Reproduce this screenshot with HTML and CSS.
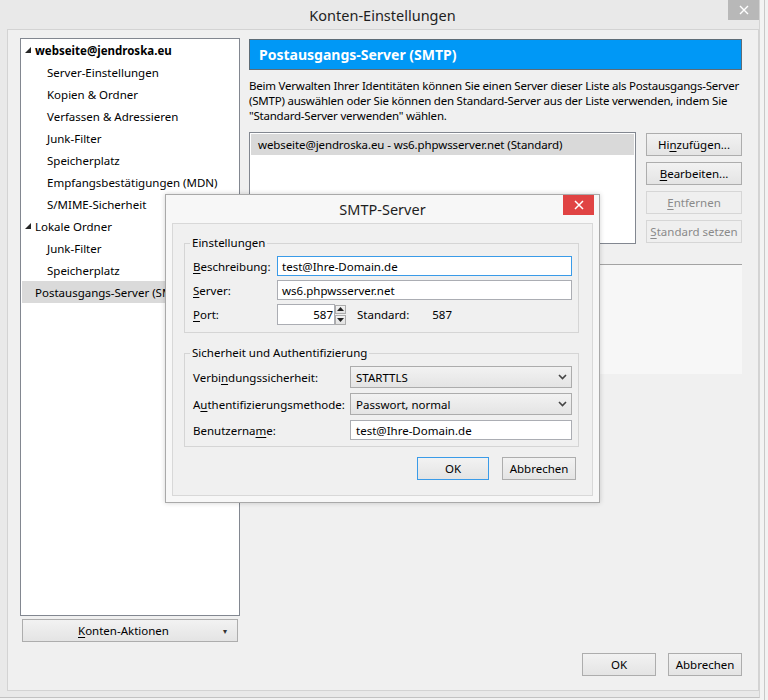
FILE: index.html
```html
<!DOCTYPE html>
<html lang="de">
<head>
<meta charset="utf-8">
<title>Konten-Einstellungen</title>
<link rel="stylesheet" href="styles.css">
</head>
<body>
<div class="screen">
  <div class="win">
    <div class="titlebar">
      <span class="title">Konten-Einstellungen</span>
      <div class="wclose"><svg width="10" height="10" viewBox="0 0 10 10"><path d="M1 1L9 9M9 1L1 9" stroke="#fff" stroke-width="1.4" fill="none"/></svg></div>
    </div>
    <div class="client">
      <div class="main">
        <div class="leftcol">
          <div class="tree">
            <div class="row lvl0 bold"><svg class="tri" width="7" height="7" viewBox="0 0 7 7"><polygon points="6,0 6,6 0,6" fill="#262626"/></svg>webseite@jendroska.eu</div>
            <div class="row lvl1">Server-Einstellungen</div>
            <div class="row lvl1">Kopien &amp; Ordner</div>
            <div class="row lvl1">Verfassen &amp; Adressieren</div>
            <div class="row lvl1">Junk-Filter</div>
            <div class="row lvl1">Speicherplatz</div>
            <div class="row lvl1">Empfangsbestätigungen (MDN)</div>
            <div class="row lvl1">S/MIME-Sicherheit</div>
            <div class="row lvl0"><svg class="tri" width="7" height="7" viewBox="0 0 7 7"><polygon points="6,0 6,6 0,6" fill="#262626"/></svg>Lokale Ordner</div>
            <div class="row lvl1">Junk-Filter</div>
            <div class="row lvl1">Speicherplatz</div>
            <div class="row lvl0 plain sel">Postausgangs-Server (SMTP)</div>
          </div>
          <button class="btn actions"><span><u>K</u>onten-Aktionen</span><span class="caret">▾</span></button>
        </div>
        <div class="rightcol">
          <div class="header">Postausgangs-Server (SMTP)</div>
          <div class="desc">Beim Verwalten Ihrer Identitäten können Sie einen Server dieser Liste als Postausgangs-Server<br>(SMTP) auswählen oder Sie können den Standard-Server aus der Liste verwenden, indem Sie<br>"Standard-Server verwenden" wählen.</div>
          <div class="listarea">
            <div class="list">
              <div class="listrow">webseite@jendroska.eu - ws6.phpwsserver.net (Standard)</div>
            </div>
            <div class="btncol">
              <button class="btn">Hi<u>n</u>zufügen...</button>
              <button class="btn"><u>B</u>earbeiten...</button>
              <button class="btn dis"><u>E</u>ntfernen</button>
              <button class="btn dis"><u>S</u>tandard setzen</button>
            </div>
          </div>
          <div class="details"></div>
        </div>
      </div>
      <div class="footer">
        <button class="btn fbtn">OK</button>
        <button class="btn fbtn">Abbrechen</button>
      </div>
    </div>
  </div>
  <div class="edge"></div>

  <div class="dialog">
    <div class="dtitle">SMTP-Server</div>
    <div class="dclose"><svg width="10" height="10" viewBox="0 0 10 10"><path d="M1 1L9 9M9 1L1 9" stroke="#fff" stroke-width="1.5" fill="none"/></svg></div>
    <div class="panel">
      <fieldset class="group g1">
        <legend>Einstellungen</legend>
        <div class="frow r1"><span><u>B</u>eschreibung:</span><div class="input focus">test@Ihre-Domain.de</div></div>
        <div class="frow r2"><span><u>S</u>erver:</span><div class="input">ws6.phpwsserver.net</div></div>
        <div class="frow r3"><span><u>P</u>ort:</span>
          <div class="portline">
            <div class="input port">587</div>
            <div class="spin">
              <div class="sp"><svg width="7" height="4" viewBox="0 0 7 4"><polygon points="3.5,0 7,4 0,4" fill="#222"/></svg></div>
              <div class="sp"><svg width="7" height="4" viewBox="0 0 7 4"><polygon points="0,0 7,0 3.5,4" fill="#222"/></svg></div>
            </div>
            <span class="stdlbl">Standard:</span><span>587</span>
          </div>
        </div>
      </fieldset>
      <fieldset class="group g2">
        <legend>Sicherheit und Authentifizierung</legend>
        <div class="frow s1"><span>Verbi<u>n</u>dungssicherheit:</span><div class="select"><span>STARTTLS</span><svg width="9" height="6" viewBox="0 0 9 6"><path d="M1 1L4.5 4.5L8 1" stroke="#444" stroke-width="1.6" fill="none"/></svg></div></div>
        <div class="frow s1"><span>A<u>u</u>thentifizierungsmethode:</span><div class="select"><span>Passwort, normal</span><svg width="9" height="6" viewBox="0 0 9 6"><path d="M1 1L4.5 4.5L8 1" stroke="#444" stroke-width="1.6" fill="none"/></svg></div></div>
        <div class="frow s2"><span>Benutzerna<u>m</u>e:</span><div class="input">test@Ihre-Domain.de</div></div>
      </fieldset>
      <div class="dbtns">
        <button class="btn dok">OK</button>
        <button class="btn dcancel">Abbrechen</button>
      </div>
    </div>
  </div>
</div>
</body>
</html>
```
FILE: styles.css
```css
* { box-sizing: border-box; }
body {
  margin: 0;
  background: #f2f2f2;
  font-family: "Segoe UI", "Noto Sans", sans-serif;
  font-size: 11.5px;
  color: #000;
}
u { text-decoration: underline; text-underline-offset: 2px; }
.screen {
  position: relative;
  width: 768px;
  height: 700px;
  overflow: hidden;
  background: #f2f2f2;
  display: flex;
}
.win {
  width: 760px;
  height: 698px;
  flex: none;
  background: #e9e9e9;
  border-right: 1px solid #d4d4d4;
  border-bottom: 1px solid #c2c2c2;
  display: flex;
  flex-direction: column;
}
.titlebar {
  height: 29px;
  flex: none;
  position: relative;
  display: flex;
  align-items: center;
  justify-content: center;
}
.title { font-size: 14.5px; color: #1e1e1e; padding-left: 6px; }
.wclose {
  position: absolute;
  top: 0;
  right: 0;
  width: 31px;
  height: 20px;
  background: #b8b8b8;
  display: flex;
  align-items: center;
  justify-content: center;
}
.client {
  flex: 1;
  margin: 0 0 6px 7px;
  border: 1px solid #d3d3d3;
  background: #f0f0f0;
  padding: 8px 16px 0 12px;
  display: flex;
  flex-direction: column;
}
.main { display: flex; gap: 9px; }
.leftcol { width: 220px; flex: none; display: flex; flex-direction: column; }
.tree {
  height: 578px;
  border: 1px solid #828790;
  background: #fff;
  padding: 0 1px;
}
.row {
  height: 22px;
  display: flex;
  align-items: center;
  white-space: nowrap;
  overflow: hidden;
}
.lvl0 { padding-left: 3px; }
.lvl0.plain { padding-left: 13px; }
.tri { margin-right: 3px; flex: none; }
.lvl1 { padding-left: 25px; }
.bold { font-weight: bold; }
.sel { background: #dadada; }
.btn {
  font: inherit;
  color: #000;
  height: 23px;
  border: 1px solid #adadad;
  background: linear-gradient(#f2f2f2, #e4e4e4);
  padding: 0;
  display: flex;
  align-items: center;
  justify-content: center;
}
.btn.dis {
  color: #8a8a8a;
  border-color: #d6d6d6;
  background: #efefef;
}
.actions {
  margin: 3px 2px 0;
  justify-content: space-between;
  padding: 0 10px 0 55px;
}
.caret { font-size: 8px; color: #333; }
.rightcol { flex: 1; display: flex; flex-direction: column; }
.header {
  margin-top: 1px;
  height: 31px;
  background: #0098f6;
  border: 1px solid #5e6c76;
  color: #fff;
  font-weight: bold;
  font-size: 14px;
  padding-left: 9px;
  display: flex;
  align-items: center;
}
.desc {
  margin-top: 8px;
  line-height: 15px;
  white-space: nowrap;
  letter-spacing: -0.22px;
}
.listarea { margin-top: 9px; display: flex; gap: 10px; }
.list {
  width: 387px;
  height: 112px;
  border: 1px solid #828790;
  background: #fff;
  padding: 1px;
}
.listrow {
  height: 21px;
  background: #d9d9d9;
  padding-left: 7px;
  display: flex;
  align-items: center;
  white-space: nowrap;
  letter-spacing: -0.1px;
}
.btncol {
  width: 96px;
  margin-top: 1px;
  display: flex;
  flex-direction: column;
  gap: 6px;
}
.details {
  margin-top: 20px;
  height: 110px;
  background: #f7f7f7;
  border-top: 1px solid #a3a3a3;
}
.footer {
  display: flex;
  justify-content: flex-end;
  gap: 12px;
  margin-top: 11px;
}
.fbtn { width: 74px; }
.edge {
  flex: 1;
  background: #f3f3f3;
  border-right: 1px solid #c8c8c8;
  margin-right: 3px;
}

/* dialog */
.dialog {
  position: absolute;
  left: 165px;
  top: 194px;
  width: 435px;
  height: 309px;
  background: #f7f7f7;
  border: 1px solid #a9a9a9;
  box-shadow: 0 0 5px rgba(0, 0, 0, 0.18);
  display: flex;
  flex-direction: column;
}
.dtitle {
  height: 28px;
  flex: none;
  display: flex;
  align-items: center;
  justify-content: center;
  font-size: 14.5px;
  color: #1e1e1e;
}
.dclose {
  position: absolute;
  top: 0;
  right: 5px;
  width: 31px;
  height: 20px;
  background: #e04343;
  display: flex;
  align-items: center;
  justify-content: center;
}
.panel {
  flex: 1;
  margin: 0 6px 6px 6px;
  border: 1px solid #d8d8d8;
  background: #f0f0f0;
  padding: 11px 13px 0 11px;
}
.group {
  margin: 0;
  border: 1px solid #d5d5d5;
  padding: 5px 6px 7px 8px;
  display: flex;
  flex-direction: column;
  gap: 4px;
}
.group legend {
  padding: 0 2px;
  margin-left: -3px;
  line-height: 16px;
}
.g2 { margin-top: 12px; gap: 5px; padding-bottom: 6px; }
.frow {
  display: grid;
  grid-template-columns: 84px 1fr;
  align-items: center;
  white-space: nowrap;
}
.g2 .frow { grid-template-columns: 157px 1fr; }
.input {
  height: 20px;
  border: 1px solid #abadb3;
  background: #fff;
  padding: 0 4px;
  display: flex;
  align-items: center;
  white-space: nowrap;
}
.input.focus { border-color: #3a9be8; }
.r3 .input { height: 21px; }
.portline { display: flex; align-items: center; }
.input.port {
  width: 58px;
  justify-content: flex-end;
  padding-right: 1px;
}
.spin {
  width: 11px;
  height: 20px;
  display: flex;
  flex-direction: column;
  gap: 1px;
}
.sp {
  flex: 1;
  border: 1px solid #acacac;
  background: linear-gradient(#f2f2f2, #e2e2e2);
  display: flex;
  align-items: center;
  justify-content: center;
}
.stdlbl { margin: 0 23px 0 11px; }
.select {
  height: 22px;
  border: 1px solid #acacac;
  background: linear-gradient(#f2f2f2, #e4e4e4);
  padding: 0 4px 0 5px;
  display: flex;
  align-items: center;
  justify-content: space-between;
}
.s2 .input { padding-left: 5px; }
.dbtns {
  margin-top: 10px;
  margin-right: 3px;
  display: flex;
  justify-content: flex-end;
  gap: 13px;
}
.dok { width: 72px; border-color: #3a9be8; }
.dcancel { width: 74px; }
```
